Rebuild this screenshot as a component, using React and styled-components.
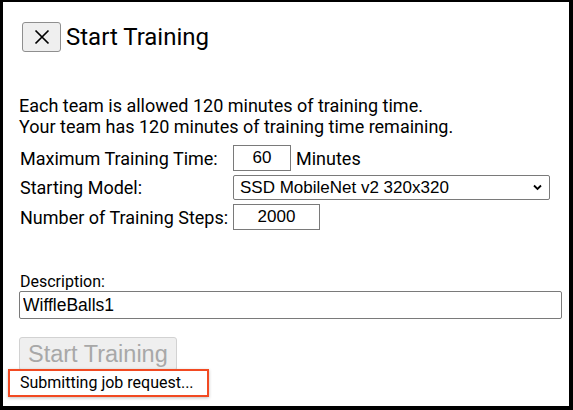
import styled, { createGlobalStyle } from 'styled-components';

const GlobalStyle = createGlobalStyle`
  html, body {
    margin: 0;
    padding: 0;
    background: #ffffff;
  }
  * {
    box-sizing: border-box;
  }
`;

const Frame = styled.div`
  width: 573px;
  height: 410px;
  border-style: solid;
  border-color: #000000;
  border-width: 2px 4px 4px 3px;
  padding: 20px 0 0 16px;
  background: #ffffff;
  font-family: Roboto, 'Liberation Sans', sans-serif;
  font-size: 18px;
  color: #000000;
  overflow: hidden;
`;

const Header = styled.div`
  display: flex;
  align-items: center;
  gap: 5px;
  height: 30px;
  margin-left: 3px;
`;

const CloseButton = styled.button`
  display: flex;
  align-items: center;
  justify-content: center;
  width: 39px;
  height: 30px;
  padding: 0;
  margin: 0;
  background: #efefef;
  border: 1px solid #8f8f8f;
  border-radius: 3px;
`;

const Title = styled.h1`
  margin: 0;
  font-size: 24px;
  font-weight: 400;
  line-height: 30px;
`;

const Intro = styled.p`
  margin: 43px 0 0;
  line-height: 21px;
`;

const Form = styled.div`
  display: grid;
  grid-template-columns: 214px auto;
  row-gap: 4px;
  align-items: center;
  margin-top: 8px;
  padding-left: 1px;
`;

const Label = styled.span`
  line-height: 21px;
`;

const Field = styled.div`
  display: flex;
  align-items: center;
  gap: 5px;
  margin-left: -1px;
`;

const NumberInput = styled.input`
  width: ${(p) => p.$width}px;
  height: 26px;
  padding: 0 2px;
  margin: 0;
  border: 1px solid #7a7a7a;
  border-radius: 0;
  font-family: 'Liberation Sans', Arial, sans-serif;
  font-size: 17px;
  text-align: center;
  color: #000000;
  background: #ffffff;
`;

const SelectWrap = styled.div`
  position: relative;
  width: 317px;
  height: 25px;
`;

const Select = styled.select`
  appearance: none;
  width: 100%;
  height: 100%;
  margin: 0;
  padding: 0 24px 0 6px;
  border: 1px solid #7a7a7a;
  border-radius: 2px;
  background: #ffffff;
  font-family: 'Liberation Sans', Arial, sans-serif;
  font-size: 17px;
  color: #000000;
`;

const Chevron = styled.svg`
  position: absolute;
  right: 8px;
  top: 9px;
  pointer-events: none;
`;

const DescLabel = styled.div`
  margin-top: 42px;
  font-size: 16px;
  line-height: 19px;
  padding-left: 1px;
`;

const TextInput = styled.input`
  display: block;
  width: 543px;
  height: 28px;
  margin: 0;
  padding: 0 3px;
  border: 1px solid #7a7a7a;
  border-radius: 2px;
  font-family: 'Liberation Sans', Arial, sans-serif;
  font-size: 17.5px;
  color: #000000;
  background: #ffffff;
`;

const SubmitButton = styled.button`
  display: block;
  height: 34px;
  margin: 18px 0 0;
  padding: 0 8px;
  border: 1px solid #d2d2d2;
  border-radius: 3px;
  background: #efefef;
  font-family: 'Liberation Sans', Arial, sans-serif;
  font-size: 23.5px;
  color: #a8a8a8;
`;

const Status = styled.div`
  position: relative;
  display: inline-block;
  margin-left: 1px;
  font-size: 16px;
  line-height: 19px;

  &::after {
    content: '';
    position: absolute;
    left: -12px;
    right: -15px;
    top: -4px;
    bottom: -5px;
    border: 2px solid #f24a22;
    box-shadow: 0 1px 3px rgba(0, 0, 0, 0.25);
  }
`;

export default function App() {
  return (
    <>
      <GlobalStyle />
      <Frame>
        <Header>
          <CloseButton aria-label='close'>
            <svg width='16' height='16' viewBox='0 0 16 16'>
              <path d='M1.5 1.5 L14.5 14.5 M14.5 1.5 L1.5 14.5' stroke='#000' strokeWidth='1.7' fill='none' />
            </svg>
          </CloseButton>
          <Title>Start Training</Title>
        </Header>
        <Intro>
          Each team is allowed 120 minutes of training time.
          <br />
          Your team has 120 minutes of training time remaining.
        </Intro>
        <Form>
          <Label>Maximum Training Time:</Label>
          <Field>
            <NumberInput $width={58} defaultValue='60' />
            <Label>Minutes</Label>
          </Field>
          <Label>Starting Model:</Label>
          <Field>
            <SelectWrap>
              <Select defaultValue='ssd320'>
                <option value='ssd320'>SSD MobileNet v2 320x320</option>
              </Select>
              <Chevron width='9' height='7' viewBox='0 0 9 7'>
                <polyline points='1,1.5 4.5,5 8,1.5' stroke='#000' strokeWidth='1.8' fill='none' />
              </Chevron>
            </SelectWrap>
          </Field>
          <Label>Number of Training Steps:</Label>
          <Field>
            <NumberInput $width={87} defaultValue='2000' />
          </Field>
        </Form>
        <DescLabel>Description:</DescLabel>
        <TextInput defaultValue='WiffleBalls1' />
        <SubmitButton disabled>Start Training</SubmitButton>
        <Status>Submitting job request...</Status>
      </Frame>
    </>
  );
}
